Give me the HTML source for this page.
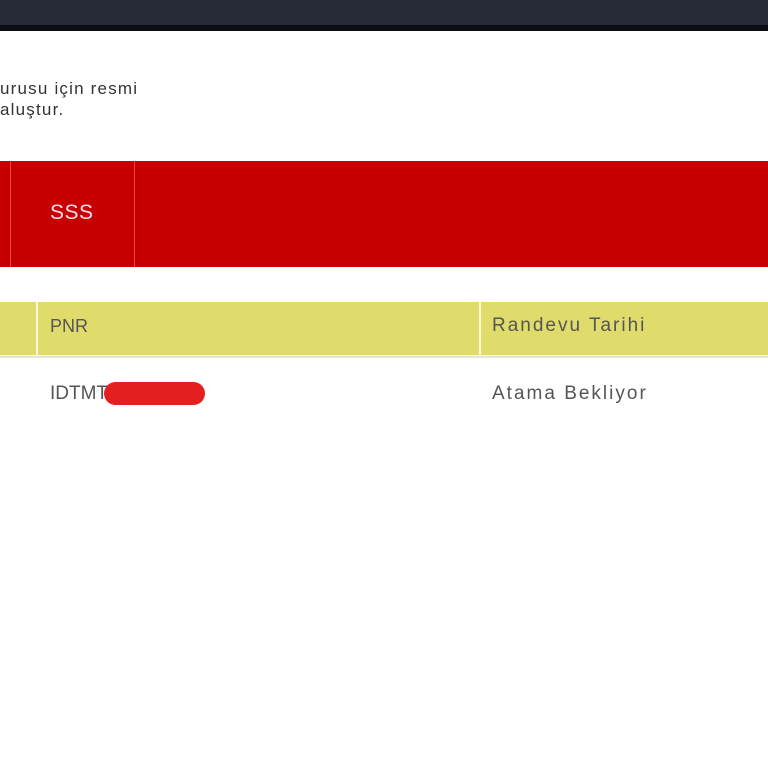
<!DOCTYPE html>
<html><head><meta charset="utf-8"><style>
*{margin:0;padding:0;box-sizing:border-box}
body{width:768px;height:768px;overflow:hidden;background:#fff;font-family:"Liberation Sans",sans-serif;position:relative}
.top{position:absolute;left:0;top:0;width:768px;height:25px;background:#262a36}
.top2{position:absolute;left:0;top:25px;width:768px;height:6px;background:#0b0d14}
.t{position:absolute;color:#333;font-size:17px;left:0;letter-spacing:1.2px}
.red{position:absolute;left:0;top:161px;width:768px;height:106px;background:#c60000}
.vl{position:absolute;top:161px;width:1px;height:106px;background:#e44848}
.yel{position:absolute;left:0;top:302px;width:768px;height:53px;background:#e0dc6c}
.yv{position:absolute;top:302px;width:2px;height:53px;background:#fbf9d8}
.hl{position:absolute;left:0;top:356px;width:768px;height:2px;background:#e4e1ec}
</style></head><body>
<div class="top"></div><div class="top2"></div>
<div class="t" style="top:79px">urusu için resmi</div>
<div class="t" style="top:100px">aluştur.</div>
<div class="red"></div>
<div class="vl" style="left:10px"></div>
<div class="vl" style="left:134px"></div>
<div style="position:absolute;left:50px;top:201px;color:#fde;font-size:21px;letter-spacing:0.5px">SSS</div>
<div class="yel"></div>
<div class="yv" style="left:36px"></div>
<div class="yv" style="left:479px"></div>
<div style="position:absolute;left:50px;top:316px;color:#555;font-size:18px">PNR</div>
<div style="position:absolute;left:492px;top:315px;color:#555;font-size:19px;letter-spacing:2px">Randevu Tarihi</div>
<div class="hl"></div>
<div style="position:absolute;left:50px;top:383px;color:#555;font-size:19px">IDTMT</div>
<div style="position:absolute;left:104px;top:382px;width:101px;height:23px;border-radius:12px;background:#e41f1f"></div>
<div style="position:absolute;left:492px;top:383px;color:#555;font-size:19px;letter-spacing:2px">Atama Bekliyor</div>
</body></html>
